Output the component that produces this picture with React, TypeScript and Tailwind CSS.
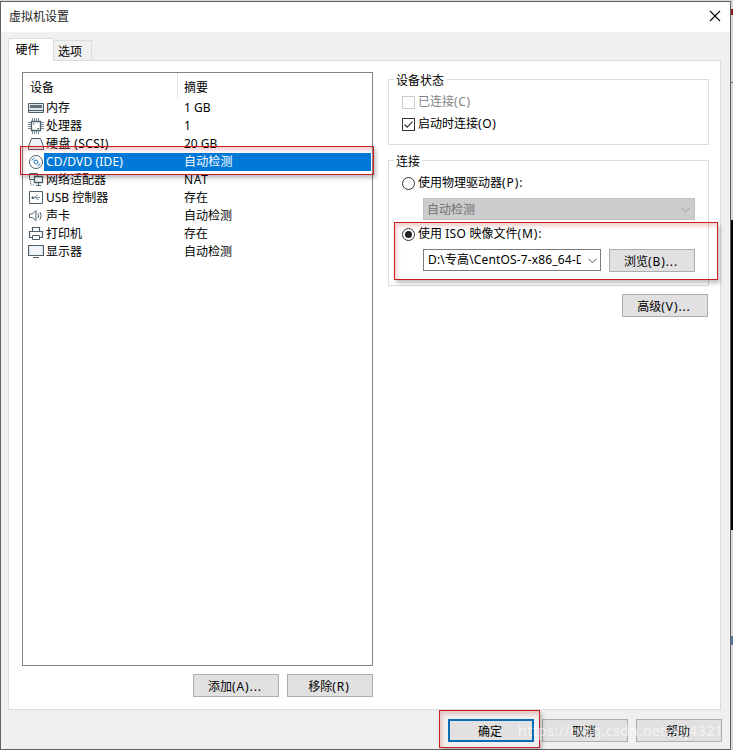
import type { ReactNode } from "react";

type IconName = "memory" | "cpu" | "disk" | "disc" | "network" | "usb" | "sound" | "printer" | "display";

const devices: { icon: IconName; name: string; summary: string; selected?: boolean }[] = [
  { icon: "memory", name: "内存", summary: "1 GB" },
  { icon: "cpu", name: "处理器", summary: "1" },
  { icon: "disk", name: "硬盘 (SCSI)", summary: "20 GB" },
  { icon: "disc", name: "CD/DVD (IDE)", summary: "自动检测", selected: true },
  { icon: "network", name: "网络适配器", summary: "NAT" },
  { icon: "usb", name: "USB 控制器", summary: "存在" },
  { icon: "sound", name: "声卡", summary: "自动检测" },
  { icon: "printer", name: "打印机", summary: "存在" },
  { icon: "display", name: "显示器", summary: "自动检测" },
];

const shapes: Record<IconName, ReactNode> = {
  memory: (
    <>
      <path d="M0.5 3.5h15v9h-15z" fill="#dfe6ea" />
      <path d="M2.5 5.5h3v2h-3zM6.5 5.5h3v2h-3zM10.5 5.5h3v2h-3z" fill="#7d8d97" />
      <path d="M1 10.5h14" />
    </>
  ),
  cpu: (
    <>
      <path d="M3.5 3.5h9v9h-9z" strokeWidth="1.3" />
      <path
        d="M4.5 0v3M6.5 0v3M8.5 0v3M10.5 0v3M4.5 13v3M6.5 13v3M8.5 13v3M10.5 13v3M0 4.5h3M0 6.5h3M0 8.5h3M0 10.5h3M13 4.5h3M13 6.5h3M13 8.5h3M13 10.5h3"
        stroke="#7d8d97"
      />
      <path d="M5 6h1.500M9.500 10.500h1.500" />
    </>
  ),
  disk: (
    <>
      <path d="M3.500 2.500h9l3 8v3h-15v-3z" fill="#eef1f3" />
      <path d="M1 10.500h14" />
    </>
  ),
  disc: (
    <>
      <circle cx="8" cy="8" r="6.5" />
      <circle cx="8" cy="8" r="2" stroke="#1c75bc" />
      <path d="M4 6.5a4.5 4.5 0 0 1 2.5-2.5M12 9.5A4.5 4.5 0 0 1 9.5 12" stroke="#1c75bc" />
    </>
  ),
  network: (
    <>
      <path d="M1.500 1.500h8v6h-8z" fill="#fff" />
      <path d="M6.500 4.500h8v6h-8z" fill="#fff" strokeWidth="1.3" />
      <path d="M8 13.500h5M10.500 11v2" />
      <path d="M2.500 9v4h3" strokeDasharray="1 1" />
    </>
  ),
  usb: (
    <>
      <path d="M1.500 1.500h13v12h-13z" />
      <path d="M5 7.500h7M6.500 7.500l2-2h1.500M7.500 7.500l1.500 2h1.500" stroke="#7d8d97" />
      <path d="M4 7h1.500v1.500h-1.500z" fill="#4d606c" />
    </>
  ),
  sound: (
    <>
      <path d="M1.500 6h3L8 2.500v10L4.500 9.500h-3z" />
      <path d="M10 5.500q1.500 2 0 4.500M12 4q2.500 3.500 0 7.500" />
    </>
  ),
  printer: (
    <>
      <path d="M4.500 6V1.500h7V6M4 11.500H1.500v-6h13v6H12" strokeWidth="1.2" />
      <path d="M4.500 9.500h7v4h-7z" fill="#fff" />
    </>
  ),
  display: (
    <>
      <path d="M0.500 1.500h15v10h-15z" fill="#f1f4f6" strokeWidth="1.2" />
      <path d="M5 13.500h6" />
    </>
  ),
};

function DeviceIcon({ name }: { name: IconName }) {
  return (
    <svg width="16" height="16" viewBox="0 0 16 16" fill="none" stroke="#4d606c" className="-mt-px shrink-0">
      {shapes[name]}
    </svg>
  );
}

function Key({ children }: { children: string }) {
  return <span className="tracking-[0.9px]">{children}</span>;
}

function Button({ children, primary }: { children: ReactNode; primary?: boolean }) {
  return (
    <button
      className={
        "flex h-[23px] w-[86px] shrink-0 items-center justify-center whitespace-pre bg-[#e1e1e1] pr-[2px] pt-[2px] leading-none " +
        (primary ? "border-2 border-[#0b6cb5]" : "border border-[#adadad]")
      }
    >
      {children}
    </button>
  );
}

function Chevron({ color }: { color: string }) {
  return (
    <svg width="9" height="6" viewBox="0 0 9 6" fill="none" stroke={color} className="shrink-0">
      <path d="M0.500 0.800l4 4l4-4" />
    </svg>
  );
}

function Group({ title, className, children }: { title: string; className: string; children: ReactNode }) {
  return (
    <section className={"border border-[#dcdcdc] " + className}>
      <h2 className="-mt-[7px] ml-[5px] w-fit bg-white px-[2px] leading-4">{title}</h2>
      {children}
    </section>
  );
}

export default function App() {
  return (
    <div className="relative flex h-[750px] w-[733px] overflow-hidden bg-[#d7d7d7] pt-[1px] text-[12px] leading-4 text-black [font-family:'Noto_Sans','Noto_Sans_CJK_SC',sans-serif]">
      <main className="flex h-[749px] w-[731px] shrink-0 flex-col border border-[#626262] bg-[#f0f0f0]">
        <header className="flex h-[30px] shrink-0 items-center justify-between bg-white pl-[8px] pr-[9px]">
          <h1 className="text-[#222]">虚拟机设置</h1>
          <svg width="12" height="12" viewBox="0 0 12 12" fill="none" stroke="#000" strokeWidth="1.1" className="-mt-[2px]">
            <path d="M1 1l10 10M11 1L1 11" />
          </svg>
        </header>

        <nav className="ml-[7px] mt-[6px] flex h-[22px] shrink-0 items-end">
          <div className="z-10 -mb-px flex h-[23px] w-[46px] shrink-0 justify-center border border-b-0 border-[#dcdcdc] bg-white pr-[7px] pt-[3px]">硬件</div>
          <div className="flex h-[20px] w-[38px] shrink-0 justify-center border border-b-0 border-l-0 border-[#dcdcdc] pr-[5px] pt-[3px]">选项</div>
        </nav>

        <section className="ml-[7px] flex h-[650px] w-[713px] shrink-0 border border-[#dcdcdc] bg-white pl-[13px] pt-[11px]">
          <div className="flex w-[351px] shrink-0 flex-col">
            <div className="h-[594px] border border-[#828282]">
              <div className="flex h-[26px] items-center">
                <span className="h-[26px] w-[155px] border-r border-[#e5e5e5] pl-[7px] pt-[7px]">设备</span>
                <span className="h-[26px] pl-[6px] pt-[7px]">摘要</span>
              </div>
              {devices.map((device) => (
                <div key={device.name} className="flex h-[18px] items-center pl-[5px] pr-[1px]">
                  <DeviceIcon name={device.icon} />
                  <div className={"-mt-px flex h-[18px] flex-1 items-center whitespace-pre pt-px " + (device.selected ? "bg-[#0078d7] tracking-[0.15px] text-white" : "")}>
                    <span className={"w-[140px] pl-[2px] " + (device.icon === "disk" ? "tracking-[0.4px]" : "")}>{device.name}</span>
                    <span className={device.icon === "network" ? "tracking-[0.6px]" : ""}>{device.summary}</span>
                  </div>
                </div>
              ))}
            </div>
            <div className="mt-[8px] flex justify-end gap-[8px]">
              <Button>添加<Key>(A)...</Key></Button>
              <Button>移除<Key>(R)</Key></Button>
            </div>
          </div>

          <div className="ml-[15px] flex w-[321px] flex-col pt-[7px]">
            <Group title="设备状态" className="h-[66px] shrink-0">
              <label className="ml-[13px] mt-[5px] flex items-center gap-[3px] text-[#838383]">
                <span className="size-[13px] border border-[#cccccc] bg-white" />
                <span>已连接<span className="tracking-[0.6px]">(C)</span></span>
              </label>
              <label className="ml-[13px] mt-[6px] flex items-center gap-[3px]">
                <span className="flex size-[13px] items-center justify-center border border-[#333] bg-white">
                  <svg width="11" height="11" viewBox="0 0 11 11" fill="none" stroke="#333" strokeWidth="1.2" className="shrink-0">
                    <path d="M1.500 5.500l2.700 2.700l5.300-5.500" />
                  </svg>
                </span>
                <span>启动时连接<span className="tracking-[0.6px]">(O)</span></span>
              </label>
            </Group>
            <Group title="连接" className="mt-[15px] h-[126px] shrink-0">
              <label className="ml-[13px] mt-[5px] flex items-center gap-[3px]">
                <span className="size-[13px] rounded-full border border-[#333]" />
                <span>使用物理驱动器<Key>(P):</Key></span>
              </label>
              <div className="ml-[34px] mt-[7px] flex h-[22px] w-[272px] items-center justify-between border border-[#bfbfbf] bg-[#cccccc] pl-[3px] pr-[4px] pt-[2px] text-[#707070]">
                <span>自动检测</span>
                <Chevron color="#9d9d9d" />
              </div>
              <label className="ml-[13px] mt-[6px] flex items-center gap-[3px]">
                <span className="flex size-[13px] items-center justify-center rounded-full border border-[#333]">
                  <span className="size-[7px] rounded-full bg-[#222]" />
                </span>
                <span>使用 <span className="tracking-[0.3px]">ISO </span>映像文件<Key>(M):</Key></span>
              </label>
              <div className="ml-[34px] mt-[7px] flex gap-[8px]">
                <div className="flex h-[22px] w-[178px] shrink-0 items-center border border-[#7a7a7a] bg-white pl-[4px]">
                  <span className="w-[153px] overflow-hidden whitespace-nowrap tracking-[0.15px]">D:\专高\CentOS-7-x86_64-D</span>
                  <span className="ml-[7px] mt-[2px]"><Chevron color="#555" /></span>
                </div>
                <Button>浏览<Key>(B)...</Key></Button>
              </div>
            </Group>
            <div className="mt-[8px] flex justify-end pr-px">
              <Button>高级<Key>(V)...</Key></Button>
            </div>
          </div>
        </section>

        <footer className="mr-[8px] mt-[9px] flex justify-end gap-[8px]">
          <Button primary>确定</Button>
          <Button>取消</Button>
          <Button>帮助</Button>
        </footer>
      </main>

      <aside className="flex w-[2px] shrink-0 flex-col">
        <div className="mt-[8px] h-[6px] bg-[#8b1717]" />
        <div className="mt-[67px] h-px bg-[#777]" />
        <div className="mt-[137px] h-[310px] bg-black" />
        <div className="mt-[106px] h-[9px] bg-[#527aa0]" />
      </aside>

      <div className="absolute left-[20px] top-[146px] h-[29px] w-[354px] border border-[#cc1f24] shadow-[2px_3px_4px_rgba(0,0,0,0.25),inset_2px_3px_4px_rgba(170,0,0,0.2)]" />
      <div className="absolute left-[394px] top-[222px] h-[58px] w-[324px] border border-[#cc1f24] shadow-[2px_3px_4px_rgba(0,0,0,0.25),inset_2px_3px_4px_rgba(170,0,0,0.2)]" />
      <div className="absolute left-[439px] top-[710px] h-[38px] w-[101px] border border-[#cc1f24] shadow-[2px_3px_4px_rgba(0,0,0,0.25),inset_2px_3px_4px_rgba(170,0,0,0.2)]" />
      <div className="absolute left-[518px] top-[721px] whitespace-nowrap text-[14px] leading-5 tracking-[0.5px] text-white/60">https://blog.csdn.net/xtj4321</div>
    </div>
  );
}
